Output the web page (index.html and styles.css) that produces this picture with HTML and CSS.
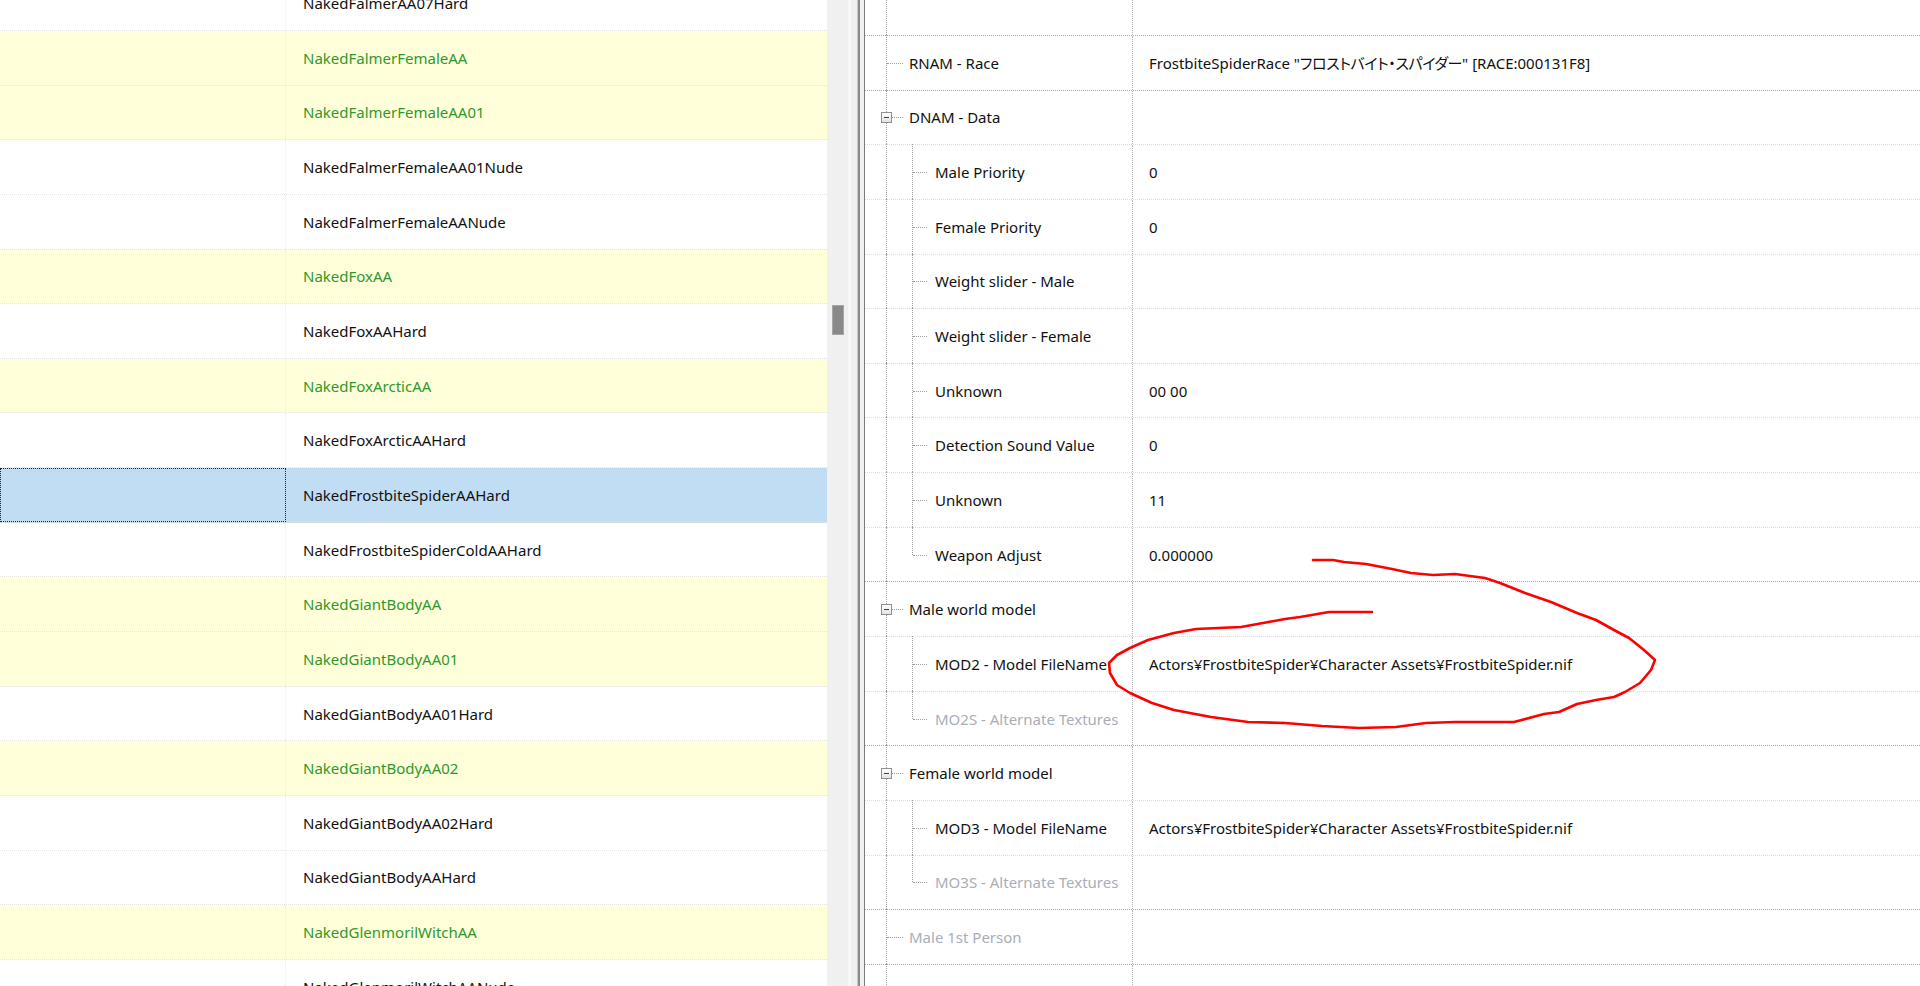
FILE: index.html
```html
<!DOCTYPE html>
<html lang="ja">
<head>
    <meta charset="UTF-8">
    <title>ArmorAddon - NakedFrostbiteSpiderAAHard</title>
    <link rel="stylesheet" href="styles.css">
</head>
<body>
<div class="app">
    <!-- record list (scrolled) -->
    <div class="records">
        <div class="rec-list">
            <div class="rec"><span class="rec-form"></span><span class="rec-name">NakedFalmerAA07Hard</span></div>
            <div class="rec new"><span class="rec-form"></span><span class="rec-name">NakedFalmerFemaleAA</span></div>
            <div class="rec new"><span class="rec-form"></span><span class="rec-name">NakedFalmerFemaleAA01</span></div>
            <div class="rec"><span class="rec-form"></span><span class="rec-name">NakedFalmerFemaleAA01Nude</span></div>
            <div class="rec"><span class="rec-form"></span><span class="rec-name">NakedFalmerFemaleAANude</span></div>
            <div class="rec new"><span class="rec-form"></span><span class="rec-name">NakedFoxAA</span></div>
            <div class="rec"><span class="rec-form"></span><span class="rec-name">NakedFoxAAHard</span></div>
            <div class="rec new"><span class="rec-form"></span><span class="rec-name">NakedFoxArcticAA</span></div>
            <div class="rec"><span class="rec-form"></span><span class="rec-name">NakedFoxArcticAAHard</span></div>
            <div class="rec sel"><span class="rec-form"></span><span class="rec-name">NakedFrostbiteSpiderAAHard</span></div>
            <div class="rec"><span class="rec-form"></span><span class="rec-name">NakedFrostbiteSpiderColdAAHard</span></div>
            <div class="rec new"><span class="rec-form"></span><span class="rec-name">NakedGiantBodyAA</span></div>
            <div class="rec new"><span class="rec-form"></span><span class="rec-name">NakedGiantBodyAA01</span></div>
            <div class="rec"><span class="rec-form"></span><span class="rec-name">NakedGiantBodyAA01Hard</span></div>
            <div class="rec new"><span class="rec-form"></span><span class="rec-name">NakedGiantBodyAA02</span></div>
            <div class="rec"><span class="rec-form"></span><span class="rec-name">NakedGiantBodyAA02Hard</span></div>
            <div class="rec"><span class="rec-form"></span><span class="rec-name">NakedGiantBodyAAHard</span></div>
            <div class="rec new"><span class="rec-form"></span><span class="rec-name">NakedGlenmorilWitchAA</span></div>
            <div class="rec"><span class="rec-form"></span><span class="rec-name">NakedGlenmorilWitchAANude</span></div>
        </div>
    </div>

    <div class="vscroll"><div class="thumb"></div></div>
    <div class="splitter"><span class="bar"></span></div>

    <!-- record view tree -->
    <div class="view">
        <div class="view-rows">
            <div class="node cut"><div class="name"><i class="trunk"></i><span>BOD2 - Biped Body Template</span></div><div class="val"><span>Clothing</span></div></div>
            <div class="node"><div class="name"><i class="trunk"></i><i class="tick"></i>RNAM - Race</div><div class="val">FrostbiteSpiderRace &quot;<span class="kana">フロストバイト・スパイダー</span>&quot; [RACE:000131F8]</div></div>
            <div class="node open"><div class="name"><i class="trunk"></i><i class="box"></i><i class="tick"></i>DNAM - Data</div><div class="val"></div></div>
            <div class="node child"><div class="name"><i class="trunk"></i><i class="branch"></i><i class="tick"></i>Male Priority</div><div class="val">0</div></div>
            <div class="node child"><div class="name"><i class="trunk"></i><i class="branch"></i><i class="tick"></i>Female Priority</div><div class="val">0</div></div>
            <div class="node child"><div class="name"><i class="trunk"></i><i class="branch"></i><i class="tick"></i>Weight slider - Male</div><div class="val"></div></div>
            <div class="node child"><div class="name"><i class="trunk"></i><i class="branch"></i><i class="tick"></i>Weight slider - Female</div><div class="val"></div></div>
            <div class="node child"><div class="name"><i class="trunk"></i><i class="branch"></i><i class="tick"></i>Unknown</div><div class="val">00 00</div></div>
            <div class="node child"><div class="name"><i class="trunk"></i><i class="branch"></i><i class="tick"></i>Detection Sound Value</div><div class="val">0</div></div>
            <div class="node child"><div class="name"><i class="trunk"></i><i class="branch"></i><i class="tick"></i>Unknown</div><div class="val">11</div></div>
            <div class="node child last"><div class="name"><i class="trunk"></i><i class="branch"></i><i class="tick"></i>Weapon Adjust</div><div class="val">0.000000</div></div>
            <div class="node open"><div class="name"><i class="trunk"></i><i class="box"></i><i class="tick"></i>Male world model</div><div class="val"></div></div>
            <div class="node child"><div class="name"><i class="trunk"></i><i class="branch"></i><i class="tick"></i>MOD2 - Model FileName</div><div class="val">Actors¥FrostbiteSpider¥Character Assets¥FrostbiteSpider.nif</div></div>
            <div class="node child last empty"><div class="name"><i class="trunk"></i><i class="branch"></i><i class="tick"></i>MO2S - Alternate Textures</div><div class="val"></div></div>
            <div class="node open"><div class="name"><i class="trunk"></i><i class="box"></i><i class="tick"></i>Female world model</div><div class="val"></div></div>
            <div class="node child"><div class="name"><i class="trunk"></i><i class="branch"></i><i class="tick"></i>MOD3 - Model FileName</div><div class="val">Actors¥FrostbiteSpider¥Character Assets¥FrostbiteSpider.nif</div></div>
            <div class="node child last empty"><div class="name"><i class="trunk"></i><i class="branch"></i><i class="tick"></i>MO3S - Alternate Textures</div><div class="val"></div></div>
            <div class="node empty"><div class="name"><i class="trunk"></i><i class="tick"></i>Male 1st Person</div><div class="val"></div></div>
            <div class="node"><div class="name"><i class="trunk"></i><i class="tick"></i></div><div class="val"></div></div>
        </div>
    </div>

    <!-- red pen mark around the model path -->
    <svg class="ink" width="1920" height="986" viewBox="0 0 1920 986">
        <polyline points="1313,560 1333,560 1344,562 1366,564 1392,569 1411,573 1433,575 1455,574 1485,578 1500,583 1525,593 1551,602 1577,613 1596,620 1614,630 1629,638 1644,650 1655,660 1651,670 1640,683 1625,692 1614,697 1596,700 1577,704 1559,712 1544,714 1514,722 1492,722 1455,722 1426,723 1396,727 1359,728 1322,726 1285,723 1248,722 1211,717 1174,710 1152,703 1130,693 1117,685 1110,673 1109,663 1117,655 1130,648 1148,640 1174,633 1196,629 1218,628 1241,627 1263,623 1285,619 1300,617 1329,612 1372,612"/>
    </svg>
</div>
</body>
</html>
```

FILE: styles.css
```css
body {
    margin: 0;
    overflow: hidden;
    background: #fff;
    font-family: "Noto Sans", "Noto Sans CJK JP", sans-serif;
    font-size: 15px;
    color: #111;
}

.app {
    position: relative;
    display: flex;
    width: 1920px;
    height: 986px;
    overflow: hidden;
}

/* ---- record list ---- */
.records {
    width: 827px;
    height: 100%;
    overflow: hidden;
}

.rec-list {
    margin-top: -23.65px;
}

.rec {
    display: flex;
    height: 54.65px;
    box-sizing: border-box;
    border-bottom: 1px dotted #e4e4e4;
    background: #fff;
}

.rec-form {
    width: 286px;
    flex-shrink: 0;
    box-sizing: border-box;
    border-right: 1px dotted #ececec;
}

.rec-name {
    display: flex;
    align-items: center;
    padding-left: 17px;
}

.rec.new {
    background: #ffffda;
}

.rec.new .rec-name {
    color: #2e982e;
}

.rec.sel {
    background: #c1ddf4;
}

.rec.sel .rec-form {
    outline: 1px dotted #222;
    outline-offset: -1px;
}

/* ---- scrollbar + splitter ---- */
.vscroll {
    width: 21px;
    height: 100%;
    background: #f0f0f0;
    padding-top: 305px;
    box-sizing: border-box;
}

.thumb {
    width: 12px;
    height: 30px;
    margin-left: 5px;
    box-sizing: border-box;
    background: #898989;
    border: 1px solid #a6a6a6;
}

.splitter {
    width: 17px;
    height: 100%;
    box-sizing: border-box;
    background: #f0f0f0;
    border-left: 3px solid #f8f8f8;
    border-right: 1px solid #7c7c7c;
    display: flex;
}

.splitter .bar {
    width: 2px;
    margin-left: 6px;
    background: #8a8a8a;
    border-left: 1px solid #c9c9c9;
}

/* ---- record view ---- */
.view {
    flex: 1;
    height: 100%;
    overflow: hidden;
}

.view-rows {
    margin-top: -19.65px;
}

.node {
    display: flex;
    height: 54.65px;
    box-sizing: border-box;
    border-top: 1px dotted #a9a9a9;
}

.node.child {
    border-top-color: #dcdcdc;
}

.name {
    position: relative;
    width: 267px;
    flex-shrink: 0;
    box-sizing: border-box;
    padding-left: 44px;
    display: flex;
    align-items: center;
    white-space: nowrap;
}

.child .name {
    padding-left: 70px;
}

.val {
    flex: 1;
    display: flex;
    align-items: center;
    padding-left: 16px;
    border-left: 1px dotted #b4b4b4;
    white-space: nowrap;
}

.kana {
    font-feature-settings: "palt";
    letter-spacing: -0.4px;
}

/* first row is scrolled mostly out of view */
.cut .name,
.cut .val {
    align-items: flex-start;
}

.cut span {
    margin-top: -2px;
}

.empty .name {
    color: #a9aeb9;
}

/* tree guide lines */
.name i {
    position: absolute;
    display: block;
}

.trunk {
    left: 21px;
    top: -1px;
    bottom: 0;
    border-left: 1px dotted #9c9c9c;
}

.branch {
    left: 47px;
    top: -1px;
    bottom: 0;
    border-left: 1px dotted #9c9c9c;
}

.last .branch {
    bottom: 50%;
}

.tick {
    left: 22px;
    width: 16px;
    top: 50%;
    border-top: 1px dotted #9c9c9c;
}

.child .tick {
    left: 48px;
    width: 14px;
}

.open .tick {
    left: 27px;
    width: 11px;
}

.box {
    left: 16px;
    top: calc(50% - 5px);
    width: 11px;
    height: 11px;
    box-sizing: border-box;
    border: 1px solid #8f8f8f;
    background: linear-gradient(#fdfdfd, #e4e4e4);
    z-index: 1;
}

.box::before {
    content: "";
    position: absolute;
    left: 2px;
    right: 2px;
    top: 4px;
    height: 1px;
    background: #2b3f7a;
}

/* pen mark */
.ink {
    position: absolute;
    left: 0;
    top: 0;
    pointer-events: none;
}

.ink polyline {
    fill: none;
    stroke: #f00;
    stroke-width: 2.6;
    stroke-linejoin: round;
    stroke-linecap: round;
}
```
